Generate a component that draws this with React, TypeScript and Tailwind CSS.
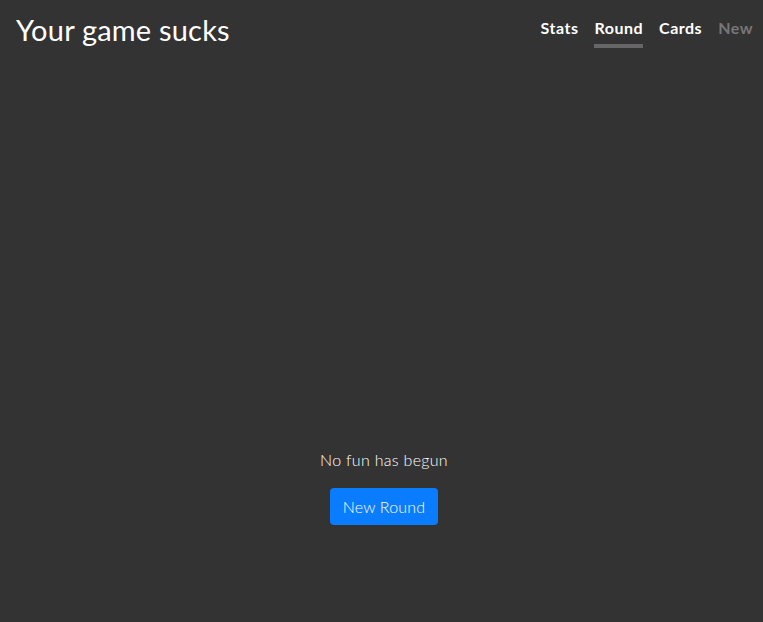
import React from 'react';

const tabs = [
  { label: 'Stats', active: false, disabled: false },
  { label: 'Round', active: true, disabled: false },
  { label: 'Cards', active: false, disabled: false },
  { label: 'New', active: false, disabled: true },
];

export default function App() {
  return (
    <div className="min-h-[622px] w-full bg-[#333333] text-white" style={{ fontFamily: 'Lato, "Noto Sans", sans-serif' }}>
      <header className="flex items-start justify-between pl-4 pr-2.5">
        <h1 className="pt-[11px] text-[29px] leading-[38px] font-normal tracking-[0.2px]">Your game sucks</h1>
        <nav className="flex gap-4 pt-[17px]">
          {tabs.map((t) => (
            <div key={t.label} className="flex flex-col">
              <span
                className={
                  'text-[16px] leading-[22px] font-bold tracking-[0.5px] ' +
                  (t.disabled ? 'text-[#777777]' : 'text-white')
                }
              >
                {t.label}
              </span>
              <span className={'mt-[5px] h-[4px] w-full ' + (t.active ? 'bg-[#666666]' : 'bg-transparent')} />
            </div>
          ))}
        </nav>
      </header>
      <main className="flex flex-col items-center pl-[5px] pt-[400px]">
        <p className="text-[16px] leading-[22px] font-light tracking-[0.3px] text-white">No fun has begun</p>
        <button className="mt-[17px] h-[37px] w-[108px] rounded-[4px] bg-[#0a7cff] text-[16px] font-light text-white tracking-[0.2px]">
          New Round
        </button>
      </main>
    </div>
  );
}
